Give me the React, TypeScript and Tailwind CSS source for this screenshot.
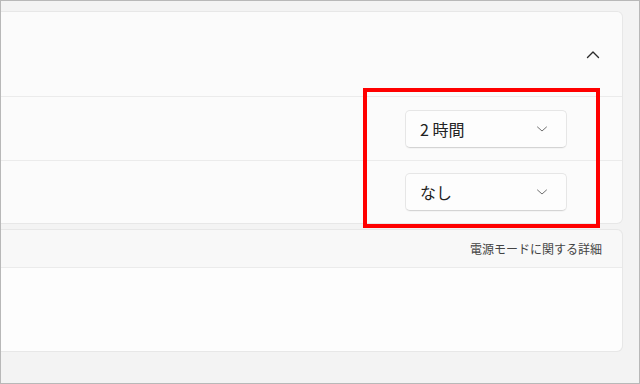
import React from 'react';

const font = { fontFamily: '"Noto Sans CJK JP", "Noto Sans", sans-serif' };

function ChevronDown() {
  return (
    <svg width="12" height="8" viewBox="0 0 12 8" fill="none">
      <path d="M1.5 2 L6 6 L10.5 2" stroke="#707070" strokeWidth="1" strokeLinecap="round" strokeLinejoin="round" />
    </svg>
  );
}

function ChevronUp() {
  return (
    <svg width="14" height="9" viewBox="0 0 14 9" fill="none">
      <path d="M1.5 7.5 L7 2 L12.5 7.5" stroke="#2b2b2b" strokeWidth="1.4" strokeLinecap="round" strokeLinejoin="round" />
    </svg>
  );
}

function Dropdown({ label }: { label: string }) {
  return (
    <div className="w-[162px] h-[38px] flex items-center justify-between pl-[14px] pr-[18px] bg-[#fdfdfd] border border-[#e6e6e6] border-b-[#d4d4d4] rounded-[5px] shadow-[0_1px_1px_rgba(0,0,0,0.03)]">
      <span className="text-[16px] text-[#222] leading-none">{label}</span>
      <ChevronDown />
    </div>
  );
}

export default function App() {
  return (
    <div style={font} className="relative w-[640px] h-[384px] border border-[#b8b8b8] bg-[#f3f3f3] overflow-hidden">
      <div className="w-[622px] pt-[10px] flex flex-col">
        {/* Settings card */}
        <div className="bg-[#fbfbfb] border border-l-0 border-[#e7e7e7] rounded-r-[6px] flex flex-col">
          <div className="h-[84px] flex items-center justify-end pr-[22px]">
            <ChevronUp />
          </div>
          <div className="h-[64px] border-t border-[#ebebeb] flex items-center justify-end pr-[55px]">
            <Dropdown label="2 時間" />
          </div>
          <div className="h-[63px] border-t border-[#ebebeb] flex items-center justify-end pr-[55px]">
            <Dropdown label="なし" />
          </div>
        </div>

        {/* Related links */}
        <div className="mt-[5px] border border-l-0 border-[#e7e7e7] rounded-r-[6px] flex flex-col">
          <div className="h-[37px] bg-[#f8f8f8] flex items-center justify-end pr-[20px] rounded-tr-[6px]">
            <span className="text-[12px] text-[#444]">電源モードに関する詳細</span>
          </div>
          <div className="h-[84px] bg-[#fdfdfd] border-t border-[#ebebeb] rounded-br-[6px]" />
        </div>
      </div>

      {/* Highlight annotation */}
      <div className="absolute left-[362px] top-[87px] w-[237px] h-[140px] border-[4px] border-[#ff0000]" />
    </div>
  );
}
